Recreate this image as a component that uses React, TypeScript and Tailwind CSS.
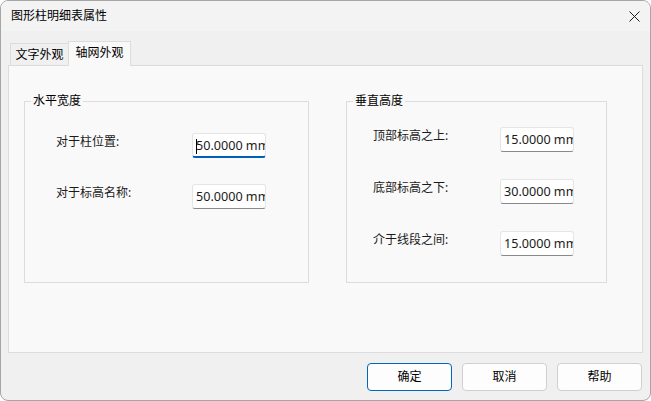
import React from "react";

const font = { fontFamily: '"Noto Sans", "Noto Sans CJK SC", sans-serif' };

function Field({ value, focused }: { value: string; focused?: boolean }) {
  return (
    <div
      className={
        "relative w-[74px] h-[25px] bg-white border border-[#e5e5e5] rounded-[3px] overflow-hidden whitespace-nowrap pl-[3px] text-[12.6px] leading-[23px] text-[#1a1a1a] " +
        (focused ? "border-b-[2px] border-b-[#005fb8]" : "border-b-[#8a8a8a]")
      }
    >
      {focused && <span className="absolute left-[3px] top-[5px] w-px h-[15px] bg-black" />}
      {value}
    </div>
  );
}

function Row({ label, value, focused, labelW }: { label: string; value: string; focused?: boolean; labelW: string }) {
  return (
    <div className="flex items-start">
      <div className={labelW + " text-[12px] leading-[16px] pt-[1px] text-[#1a1a1a]"}>{label}</div>
      <Field value={value} focused={focused} />
    </div>
  );
}

export default function App() {
  return (
    <div style={font} className="w-[651px] h-[401px] bg-[#f0f0f0] border border-[#a6a6a6] rounded-[8px] overflow-hidden flex flex-col text-black">
      <div className="h-[30px] bg-[#f3f3f3] flex items-center justify-between pl-[10px] pr-[10px]">
        <span className="text-[12px]">图形柱明细表属性</span>
        <svg width="11" height="11" viewBox="0 0 11 11">
          <path d="M0.5 0.5 L10.5 10.5 M10.5 0.5 L0.5 10.5" stroke="#1a1a1a" strokeWidth="1" />
        </svg>
      </div>
      <div className="px-[7px] pt-[9px]">
        <div className="flex items-end pl-[2px] h-[25px]">
          <div className="h-[22px] w-[58px] bg-[#f0f0f0] border border-[#dcdcdc] border-b-0 border-r-0 text-[12px] flex items-center justify-center">文字外观</div>
          <div className="relative h-[25px] w-[63px] bg-[#f9f9f9] border border-[#dcdcdc] border-b-0 text-[12px] flex items-center justify-center -mb-px z-10 pb-[2px]">轴网外观</div>
        </div>
        <div className="h-[288px] bg-[#f9f9f9] border border-[#dcdcdc] pl-[15px] pt-[27px] flex gap-[37px]">
          <fieldset className="w-[285px] h-[190px] border border-[#dcdcdc]">
            <legend className="ml-[6px] px-[2px] text-[12px] leading-[16px]">水平宽度</legend>
            <div className="flex flex-col gap-[26px] pl-[31px] pt-[24px]">
              <Row label="对于柱位置:" value="50.0000 mm" focused labelW="w-[136px]" />
              <Row label="对于标高名称:" value="50.0000 mm" labelW="w-[136px]" />
            </div>
          </fieldset>
          <fieldset className="w-[261px] h-[190px] border border-[#dcdcdc]">
            <legend className="ml-[6px] px-[2px] text-[12px] leading-[16px]">垂直高度</legend>
            <div className="flex flex-col gap-[27px] pl-[26px] pt-[18px]">
              <Row label="顶部标高之上:" value="15.0000 mm" labelW="w-[127px]" />
              <Row label="底部标高之下:" value="30.0000 mm" labelW="w-[127px]" />
              <Row label="介于线段之间:" value="15.0000 mm" labelW="w-[127px]" />
            </div>
          </fieldset>
        </div>
      </div>
      <div className="flex justify-end gap-[10px] pr-[8px] pt-[10px]">
        <button className="w-[85px] h-[28px] rounded-[4px] bg-[#fdfdfd] border border-[#0067c0] text-[12px]">确定</button>
        <button className="w-[85px] h-[28px] rounded-[4px] bg-[#fdfdfd] border border-[#d0d0d0] text-[12px]">取消</button>
        <button className="w-[85px] h-[28px] rounded-[4px] bg-[#fdfdfd] border border-[#d0d0d0] text-[12px]">帮助</button>
      </div>
    </div>
  );
}
